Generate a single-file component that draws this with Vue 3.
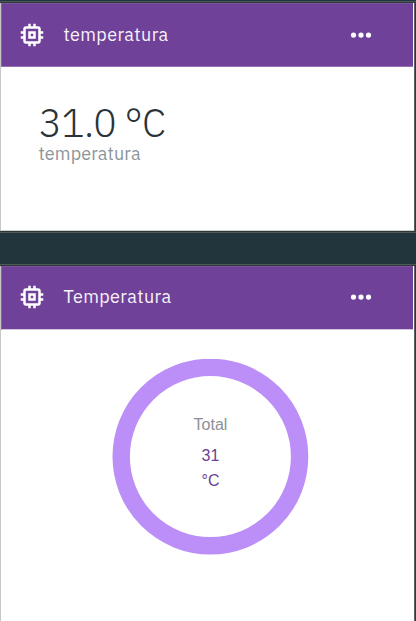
<script setup>
const memory = 'M15 9H9v6h6V9zm-2 4h-2v-2h2v2zm8-2V9h-2V7c0-1.1-.9-2-2-2h-2V3h-2v2h-2V3H9v2H7c-1.1 0-2 .9-2 2v2H3v2h2v2H3v2h2v2c0 1.1.9 2 2 2h2v2h2v-2h2v2h2v-2h2c1.1 0 2-.9 2-2v-2h2v-2h-2v-2h2zm-4 6H7V7h10v10z'
</script>

<template>
  <main class="board">
    <section class="card value-card">
      <header class="bar">
        <svg class="icon" viewBox="0 0 24 24"><path :d="memory" /></svg>
        <h2 class="title">temperatura</h2>
        <svg class="icon" viewBox="0 0 24 24"><circle cx="6" cy="12" r="2.1" /><circle cx="12" cy="12" r="2.1" /><circle cx="18" cy="12" r="2.1" /></svg>
      </header>
      <div class="reading">
        <div class="number">31.0 °C</div>
        <div class="label">temperatura</div>
      </div>
    </section>
    <div class="gap"></div>
    <section class="card chart-card">
      <header class="bar">
        <svg class="icon" viewBox="0 0 24 24"><path :d="memory" /></svg>
        <h2 class="title">Temperatura</h2>
        <svg class="icon" viewBox="0 0 24 24"><circle cx="6" cy="12" r="2.1" /><circle cx="12" cy="12" r="2.1" /><circle cx="18" cy="12" r="2.1" /></svg>
      </header>
      <div class="chart">
        <svg class="ring" viewBox="0 0 198 198"><circle cx="98.4" cy="97.6" r="89.2" /></svg>
        <div class="figures">
          <span class="total">Total</span>
          <span>31</span>
          <span>°C</span>
        </div>
      </div>
    </section>
  </main>
</template>

<style>
body { margin: 0; background: #22343c; }
</style>

<style scoped>
.board {
  box-sizing: border-box;
  width: 416px;
  height: 621px;
  overflow: hidden;
  display: flex;
  flex-direction: column;
  background: linear-gradient(#22343c 0 1px, #4a5559 1px 2px, #343a3b 2px 3px, transparent 3px), linear-gradient(90deg, #596265 415px, #303a3c 415px);
  padding-top: 3px;
}
.card {
  box-sizing: border-box;
  flex: none;
  width: 414px;
  background: #fff;
  border-left: 1px solid #c6c6c6;
}
.value-card { height: 228px; border-bottom: 1px solid #cbd0cb; }
.chart-card { height: 356px; }
.gap {
  box-sizing: border-box;
  flex: none;
  height: 35px;
  background: #22343c;
  border-top: 1px solid #303636;
  border-bottom: 1px solid #303636;
  box-shadow: inset 0 1px #515a5a, inset 0 -1px #515a5a;
}
.bar {
  box-sizing: border-box;
  display: flex;
  align-items: center;
  width: 412px;
  height: 64px;
  padding: 0 37px 0 15px;
  background: #704198;
  border-top: 1px solid #79539b;
  border-bottom: 1px solid #9670b5;
  border-left: 1px solid #8a64a9;
}
.chart-card .bar { border-bottom-color: #d5c6e0; padding-bottom: 2px; }
.icon { width: 30px; height: 30px; flex: none; fill: #fff; }
.title {
  flex: 1;
  margin: 0 0 0 16.4px;
  font: 400 18px/24px "IBM Plex Sans", "Noto Sans", sans-serif;
  color: #f7f4f9;
  letter-spacing: 0.38px;
}
.reading { padding: 35px 0 0 37.5px; color: #2b3337; }
.number {
  height: 40px;
  font: 300 39px/41px "IBM Plex Sans", Roboto, sans-serif;
  letter-spacing: -0.7px;
}
.label {
  font: 400 18px/24px "IBM Plex Sans", "Noto Sans", sans-serif;
  letter-spacing: 0.1px;
  color: #8c9499;
}
.chart {
  display: grid;
  width: 198px;
  margin: 29px 0 0 111px;
}
.ring, .figures { grid-area: 1 / 1; }
.ring { width: 198px; height: 198px; fill: none; stroke: #bb8ff7; stroke-width: 17.4px; }
.figures {
  padding: 53px 1px 0 0;
  display: flex;
  flex-direction: column;
  align-items: center;
  font: 16px/25px "Liberation Sans", Arial, sans-serif;
  color: #6b3f93;
}
.total { color: #8c9096; margin-bottom: 6px; }
</style>
